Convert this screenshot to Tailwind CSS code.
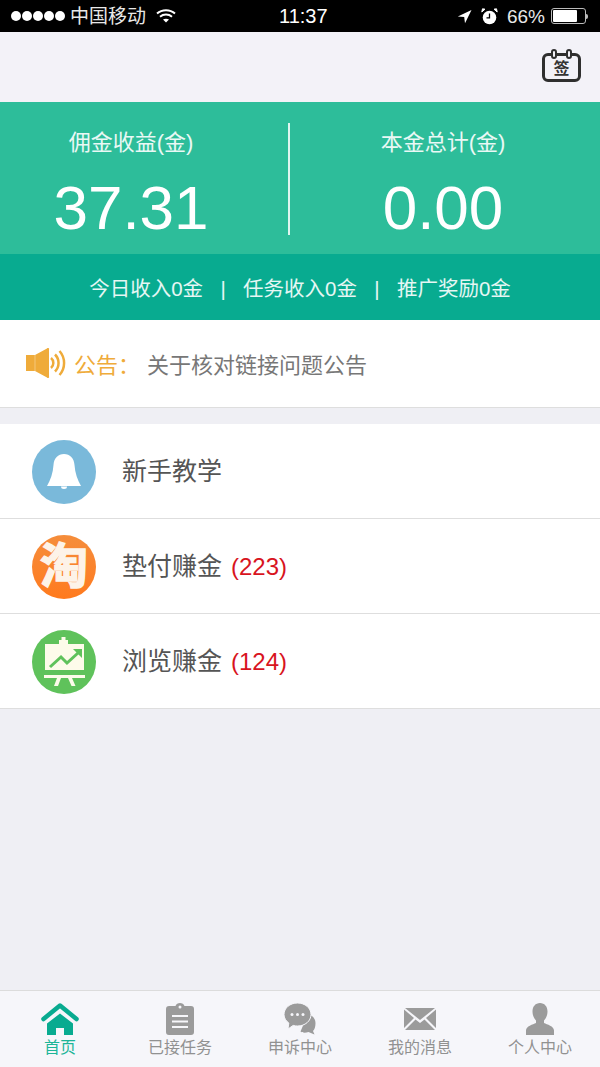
<!DOCTYPE html>
<html lang="zh-CN">
  <head>
    <meta charset="UTF-8" />
    <meta name="viewport" content="width=device-width, initial-scale=1" />
    <title>首页</title>
    <script src="https://cdn.jsdelivr.net/npm/@tailwindcss/browser@4"></script>
  </head>
  <body class="bg-[#efeff4] font-['Liberation_Sans','Noto_Sans_CJK_SC',sans-serif]">
    <div class="flex h-[1067px] w-[600px] flex-col overflow-hidden">
      <!-- status bar -->
      <div class="relative flex h-8 shrink-0 items-center bg-black pl-[11px] pr-3 text-[#e8e8e8]">
        <div class="flex gap-[1px]">
          <span class="size-[10px] rounded-full bg-white"></span>
          <span class="size-[10px] rounded-full bg-white"></span>
          <span class="size-[10px] rounded-full bg-white"></span>
          <span class="size-[10px] rounded-full bg-white"></span>
          <span class="size-[10px] rounded-full bg-white"></span>
        </div>
        <span class="ml-[5px] text-[19px] leading-none">中国移动</span>
        <svg class="ml-[10px]" width="20" height="16" viewBox="0 0 20 16" fill="none" stroke="#fff" stroke-width="2">
          <path d="M1 5.500C6 1 14 1 19 5.500" />
          <path d="M4 8.800C7.500 5.800 12.500 5.800 16 8.800" />
          <path d="M10 14.500 7 11.600C8.800 10.400 11.200 10.400 13 11.600Z" fill="#fff" stroke="none" />
        </svg>
        <span class="absolute left-[279px] text-[20px] font-medium leading-none text-white">11:37</span>
        <svg class="ml-auto" width="15" height="15" viewBox="0 0 15 15" fill="#fff">
          <path d="M14.500 1 .8 7.600 7.200 8 8 14.300Z" />
        </svg>
        <svg class="ml-[9px]" width="17" height="17" viewBox="0 0 17 17">
          <circle cx="8.500" cy="9.500" r="6.800" fill="#fff" />
          <path d="M8.500 5.500v4.300H5.500" fill="none" stroke="#000" stroke-width="1.300" />
          <path d="M.8 4 4 1.200 1.500 .8ZM16.200 4 13 1.200 15.500 .8Z" fill="#fff" stroke="#fff" />
        </svg>
        <span class="ml-[9px] text-[19px] leading-none">66%</span>
        <div class="ml-[6px] flex h-[16px] w-[35px] items-center rounded-[3px] border border-[#bbb] p-[1px]">
          <div class="h-full w-[24px] rounded-[1px] bg-white"></div>
        </div>
        <div class="h-[5px] w-[2px] rounded-r-sm bg-[#bbb]"></div>
      </div>

      <!-- top bar -->
      <div class="flex h-[70px] shrink-0 justify-end bg-[#f3f2f8] pr-[19px] pt-[17px]">
        <div class="relative h-[33px] w-[39px]">
          <div class="absolute inset-x-0 bottom-0 flex h-[29px] items-end justify-center rounded-[6px] border-[3px] border-[#2f2f2f] text-[16px] font-bold leading-[20px] text-[#333]">签</div>
          <span class="absolute left-[9px] top-0 h-[10px] w-[6px] rounded-full border-[2px] border-[#2f2f2f] bg-[#f3f2f8]"></span>
          <span class="absolute right-[9px] top-0 h-[10px] w-[6px] rounded-full border-[2px] border-[#2f2f2f] bg-[#f3f2f8]"></span>
        </div>
      </div>

      <!-- earnings -->
      <div class="flex h-[152px] shrink-0 bg-[#2dbd9a] pt-[21px] text-white">
        <div class="flex w-[262px] flex-col items-center">
          <span class="mt-[5px] text-[22px] leading-[30px] text-white/90">佣金收益(金)</span>
          <span class="mt-[15px] text-[62px] leading-[70px]">37.31</span>
        </div>
        <div class="ml-[26px] h-[112px] w-[2px] bg-white/85"></div>
        <div class="flex flex-1 flex-col items-center pr-1">
          <span class="mt-[5px] text-[22px] leading-[30px] text-white/90">本金总计(金)</span>
          <span class="mt-[15px] text-[62px] leading-[70px]">0.00</span>
        </div>
      </div>
      <div class="flex h-[66px] shrink-0 items-center justify-center bg-[#08ab90] pt-1 text-[20.5px] text-white/90">
        <span>今日收入0金</span>
        <span class="w-[40px] text-center">|</span>
        <span>任务收入0金</span>
        <span class="w-[40px] text-center">|</span>
        <span>推广奖励0金</span>
      </div>

      <!-- notice -->
      <div class="flex h-[88px] shrink-0 items-center border-b border-[#dedede] bg-white pl-[26px] pt-1">
        <svg class="mb-[6px]" width="40" height="30" viewBox="0 0 40 30">
          <path d="M0 7h9L21 .5a1 1 0 0 1 2 1v27a1 1 0 0 1-2 1L9 23H0Z" fill="#efab3a" />
          <path d="M9 7v16" stroke="#f6cf8e" stroke-width=".8" />
          <path d="M25 10a6.500 6.500 0 0 1 0 10M29 6.500a12 12 0 0 1 0 17M33.500 3a18 18 0 0 1 0 24" fill="none" stroke="#efab3a" stroke-width="2.500" />
        </svg>
        <span class="ml-[8px] w-[73px] text-[22px] text-[#efab3a]">公告：</span>
        <span class="text-[22px] text-[#777]">关于核对链接问题公告</span>
      </div>

      <!-- menu -->
      <div class="mt-4 shrink-0">
        <div class="flex h-[95px] items-center border-b border-[#dedede] bg-white pl-8 pt-[2px]">
          <div class="flex size-16 items-center justify-center rounded-full bg-[#7ab9da]">
            <svg width="34" height="36" viewBox="0 0 34 36" fill="#fff">
              <path d="M17 0C11 0 7 4 6.500 11c-.5 8-3 15-6.500 21h34c-3.500-6-6-13-6.500-21C27 4 23 0 17 0Z" />
              <path d="M14 32.500a3 2.500 0 0 0 6 0Z" />
            </svg>
          </div>
          <span class="ml-[26px] text-[25px] text-[#555]">新手教学</span>
        </div>
        <div class="flex h-[95px] items-center border-b border-[#dedede] bg-white pl-8 pt-[2px]">
          <div class="flex size-16 items-center justify-center rounded-full bg-gradient-to-b from-[#f58d3b] to-[#ff7a1c] text-[48px] font-bold leading-none text-[#fdf3e8] [-webkit-text-stroke:1.5px_#fdf3e8]">淘</div>
          <span class="ml-[26px] text-[25px] text-[#555]">垫付赚金</span>
          <span class="ml-[9px] text-[24px] text-[#d8141e]">(223)</span>
        </div>
        <div class="flex h-[95px] items-center border-b border-[#dedede] bg-white pl-8 pt-[2px]">
          <div class="size-16 rounded-full bg-[#5fc25b]">
            <svg width="64" height="64" viewBox="0 0 64 64">
              <path d="M27 10h9v4h-9ZM29.500 7h4v4h-4Z" fill="#fdfbea" />
              <rect x="13" y="14" width="39" height="26" fill="#fdfbea" />
              <rect x="12" y="45" width="41" height="3" fill="#fdfbea" />
              <path d="M25 48h4l-3 8h-4ZM36 48h4l3.500 8h-4Z" fill="#fdfbea" />
              <path d="M18 37 29 27l6 6 11-10" fill="none" stroke="#5fc25b" stroke-width="3" />
              <path d="M41 19h9v9Z" fill="#5fc25b" />
            </svg>
          </div>
          <span class="ml-[26px] text-[25px] text-[#555]">浏览赚金</span>
          <span class="ml-[9px] text-[24px] text-[#d8141e]">(124)</span>
        </div>
      </div>

      <!-- tab bar -->
      <div class="mt-auto grid h-[77px] shrink-0 grid-cols-5 border-t border-[#dcdcdc] bg-[#f6f6fa] text-[16px] text-[#919191]">
        <div class="flex flex-col items-center pt-[12px] text-[#1db598]">
          <svg width="38" height="32" viewBox="0 0 38 32" fill="#08ab90">
            <path d="M2.500 16 19 2.500 35.500 16" fill="none" stroke="#08ab90" stroke-width="4.500" stroke-linecap="round" stroke-linejoin="round" />
            <path d="M19 10.500 32 20.500V32H23V25H15V32H6V20.500Z" />
          </svg>
          <span class="mt-[3px] leading-5">首页</span>
        </div>
        <div class="flex flex-col items-center pt-[12px]">
          <svg width="28" height="32" viewBox="0 0 28 32">
            <path d="M3 3h6.500C10 1 12 0 14 0s4 1 4.500 3H25a3 3 0 0 1 3 3v23a3 3 0 0 1-3 3H3a3 3 0 0 1-3-3V6a3 3 0 0 1 3-3Z" fill="#9b9b9b" />
            <path d="M6 13h16M6 18.500h16M6 24h16" stroke="#f6f6fa" stroke-width="2" />
            <circle cx="14" cy="4" r="1.500" fill="#f6f6fa" />
          </svg>
          <span class="mt-[3px] leading-5">已接任务</span>
        </div>
        <div class="flex flex-col items-center pt-[12px]">
          <svg width="32" height="32" viewBox="0 0 32 32">
            <path d="M24 11c5 1.500 7.500 5 7.500 9 0 4-1 6.500-2.500 8l1.500 3.500-6-2.500c-3 1-6 1-8-.5Z" fill="#9b9b9b" />
            <path d="M13.500 0C21 0 27 5 27 11.500S21 23 13.500 23c-1.500 0-3-.2-4.300-.6L4 26l.8-6C2 18 0 15 0 11.500 0 5 6 0 13.500 0Z" fill="#9b9b9b" stroke="#f6f6fa" />
            <circle cx="8" cy="11.500" r="1.500" fill="#f6f6fa" />
            <circle cx="13.500" cy="11.500" r="1.500" fill="#f6f6fa" />
            <circle cx="19" cy="11.500" r="1.500" fill="#f6f6fa" />
          </svg>
          <span class="mt-[3px] leading-5">申诉中心</span>
        </div>
        <div class="flex flex-col items-center pt-[12px]">
          <svg width="32" height="32" viewBox="0 0 32 32" fill="#9b9b9b">
            <path d="M1 5h30L16 17Z" />
            <path d="M0 6.500 10 15 0 25ZM32 6.500 22 15 32 25ZM1 27 11.500 16.500 16 20l4.500-3.500L31 27Z" />
          </svg>
          <span class="mt-[3px] leading-5">我的消息</span>
        </div>
        <div class="flex flex-col items-center pt-[12px]">
          <svg width="28" height="32" viewBox="0 0 28 32" fill="#9b9b9b">
            <path d="M14 0c4.500 0 7.500 3.500 7.500 8.500 0 3.500-1.500 7-3.500 9v2.500c3 1.500 10 3 10 7.500V32H0v-4.500C0 23 7 21.500 10 20v-2.500c-2-2-3.500-5.500-3.500-9C6.500 3.500 9.500 0 14 0Z" />
          </svg>
          <span class="mt-[3px] leading-5">个人中心</span>
        </div>
      </div>
    </div>
  </body>
</html>
